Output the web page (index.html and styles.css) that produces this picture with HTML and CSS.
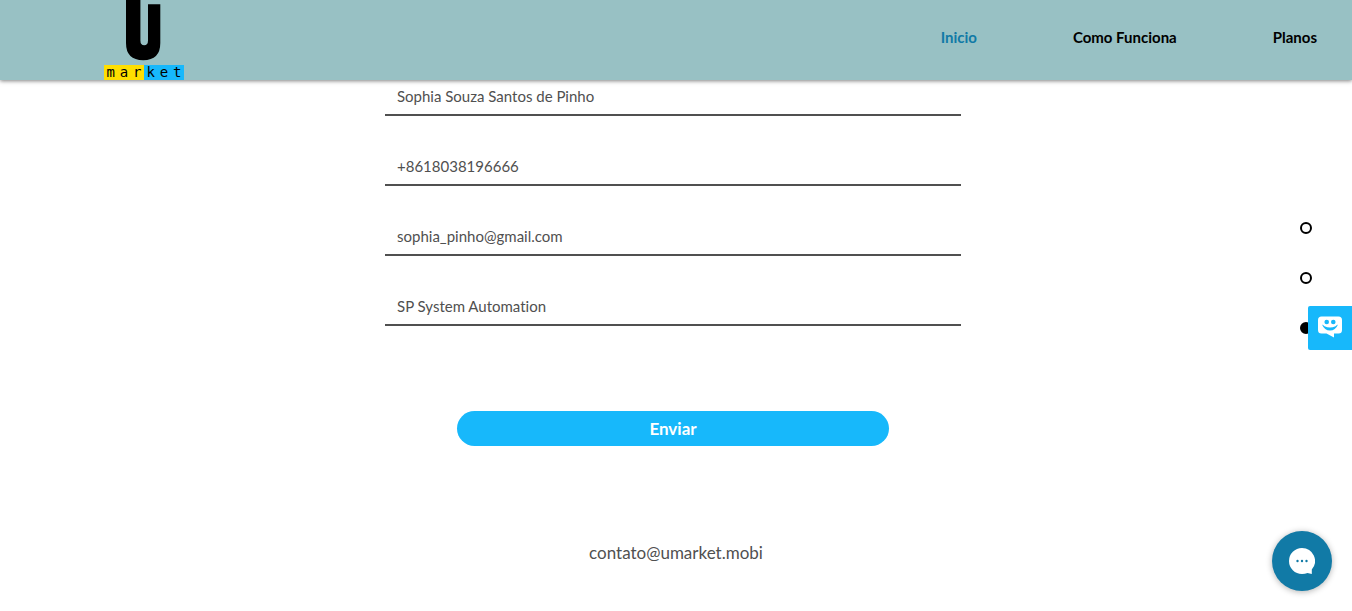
FILE: index.html
```html
<!DOCTYPE html>
<html lang="pt-BR">
<head>
<meta charset="utf-8">
<meta name="viewport" content="width=device-width, initial-scale=1">
<title>U market</title>
<link rel="stylesheet" href="styles.css">
</head>
<body>
<header class="header">
  <a class="logo" href="#inicio" aria-label="U market">
    <svg class="logo-u" viewBox="0 0 80 65" aria-hidden="true"><path d="M22 0H36.400V40.500Q36.400 45.300 40.200 45.300Q44 45.300 44 40.500V4.200H56.300V43Q56.300 60.200 39.200 60.200Q22 60.200 22 43Z"/></svg>
    <span class="logo-name"><span>m</span><span>a</span><span>r</span><span>k</span><span>e</span><span>t</span></span>
  </a>
  <nav class="nav">
    <a class="nav-link nav-link-active" href="#inicio">Inicio</a>
    <a class="nav-link" href="#como-funciona">Como Funciona</a>
    <a class="nav-link" href="#planos">Planos</a>
  </nav>
</header>
<main class="main">
  <form class="form">
    <input class="field" type="text" aria-label="Nome" value="Sophia Souza Santos de Pinho">
    <input class="field" type="tel" aria-label="Telefone" value="+8618038196666">
    <input class="field" type="email" aria-label="Email" value="sophia_pinho@gmail.com">
    <input class="field" type="text" aria-label="Empresa" value="SP System Automation">
    <button class="submit" type="button">Enviar</button>
  </form>
</main>
<footer class="footer"><a class="contact" href="mailto:contato@umarket.mobi">contato@umarket.mobi</a></footer>
<nav class="dots" aria-label="Seções">
  <a class="dot" href="#inicio" aria-label="Inicio"></a>
  <a class="dot" href="#como-funciona" aria-label="Como Funciona"></a>
  <a class="dot dot-active" href="#contato" aria-label="Contato"></a>
</nav>
<button class="feedback" type="button" aria-label="Comentários">
  <svg width="24" height="22" viewBox="0 0 24 22" aria-hidden="true">
    <path fill="#fff" d="M3.500 .5H20.500Q24 .5 24 4V14Q24 17.500 20.500 17.500H16V21.500L8.500 17.500H3.500Q0 17.500 0 14V4Q0 .5 3.500 .5Z"/>
    <circle cx="8.700" cy="6" r="2.300" fill="#17b8fb"/><circle cx="15.300" cy="6" r="2.300" fill="#17b8fb"/>
    <path fill="#17b8fb" d="M4 8.500Q5.500 9.300 6.500 10.200Q12 13 17.500 10.200Q18.500 9.300 20 8.500Q17.500 14.500 12 14.500Q6.500 14.500 4 8.500Z"/>
  </svg>
</button>
<button class="chat" type="button" aria-label="Chat">
  <svg width="26" height="26" viewBox="0 0 26 26" aria-hidden="true">
    <path fill="#fff" d="M13 0A13 13 0 0 1 22.800 21.500V26L18.500 25Q16 26 13 26A13 13 0 0 1 13 0Z"/>
    <g fill="#117aa6"><circle cx="8.500" cy="13" r="1.200"/><circle cx="13" cy="13" r="1.200"/><circle cx="17.500" cy="13" r="1.200"/></g>
  </svg>
</button>
</body>
</html>
```
FILE: styles.css
```css
* { box-sizing: border-box; }
body {
  margin: 0;
  background: #fff;
  color: #505050;
  font-family: Lato, "Open Sans", sans-serif;
}
a { color: inherit; text-decoration: none; }
button { border: 0; padding: 0; font-family: inherit; cursor: pointer; }

.header {
  position: sticky;
  top: 0;
  z-index: 1;
  display: flex;
  justify-content: space-between;
  height: 80px;
  padding: 0 35px 0 104px;
  background: #98c1c4;
  box-shadow: 0 1px 4px rgba(0, 0, 0, 0.5);
}
.logo { width: 80px; color: #000; }
.logo-u { display: block; width: 80px; height: 65px; }
.logo-name {
  display: grid;
  grid-template-columns: repeat(6, 1fr);
  height: 15px;
  background: linear-gradient(90deg, #ffdf00 50%, #17b8fb 50%);
  font: 14px/15px "DejaVu Sans Mono", monospace;
  text-align: center;
}
.nav { display: flex; gap: 96px; }
.nav-link {
  color: #000;
  font-size: 15px;
  font-weight: 700;
  line-height: 74px;
}
.nav-link-active { color: #117aa6; }

.main { padding: 0 6px 0 0; }
.form {
  display: flex;
  flex-direction: column;
  gap: 34px;
  max-width: 576px;
  margin: 0 auto;
}
.field {
  width: 100%;
  height: 36px;
  padding: 0 12px 2px;
  border: 0;
  border-bottom: 2px solid #505050;
  background: transparent;
  color: #505050;
  font: 15px Lato, "Open Sans", sans-serif;
  font-variant-ligatures: none;
  outline: 0;
}
.submit {
  align-self: center;
  width: 75%;
  height: 35px;
  margin-top: 51px;
  border-radius: 18px;
  background: #17b8fb;
  color: #fff;
  font-size: 17px;
  font-weight: 700;
}
.footer { padding: 95px 0 34px; text-align: center; }
.contact { font-size: 17px; line-height: 24px; }

.dots {
  position: fixed;
  top: 222px;
  right: 40px;
  display: grid;
  gap: 38px;
}
.dot {
  width: 12px;
  height: 12px;
  border: 2px solid #000;
  border-radius: 50%;
}
.dot-active { background: #000; }
.feedback {
  position: fixed;
  top: 306px;
  right: 0;
  display: grid;
  place-items: center;
  width: 44px;
  height: 44px;
  padding-bottom: 2px;
  border-radius: 2px 0 0 2px;
  background: #17b8fb;
}
.chat {
  position: fixed;
  right: 20px;
  bottom: 20px;
  display: grid;
  place-items: center;
  width: 60px;
  height: 60px;
  border-radius: 50%;
  background: #117aa6;
  box-shadow: 0 1px 6px rgba(0, 0, 0, 0.3);
}
```
